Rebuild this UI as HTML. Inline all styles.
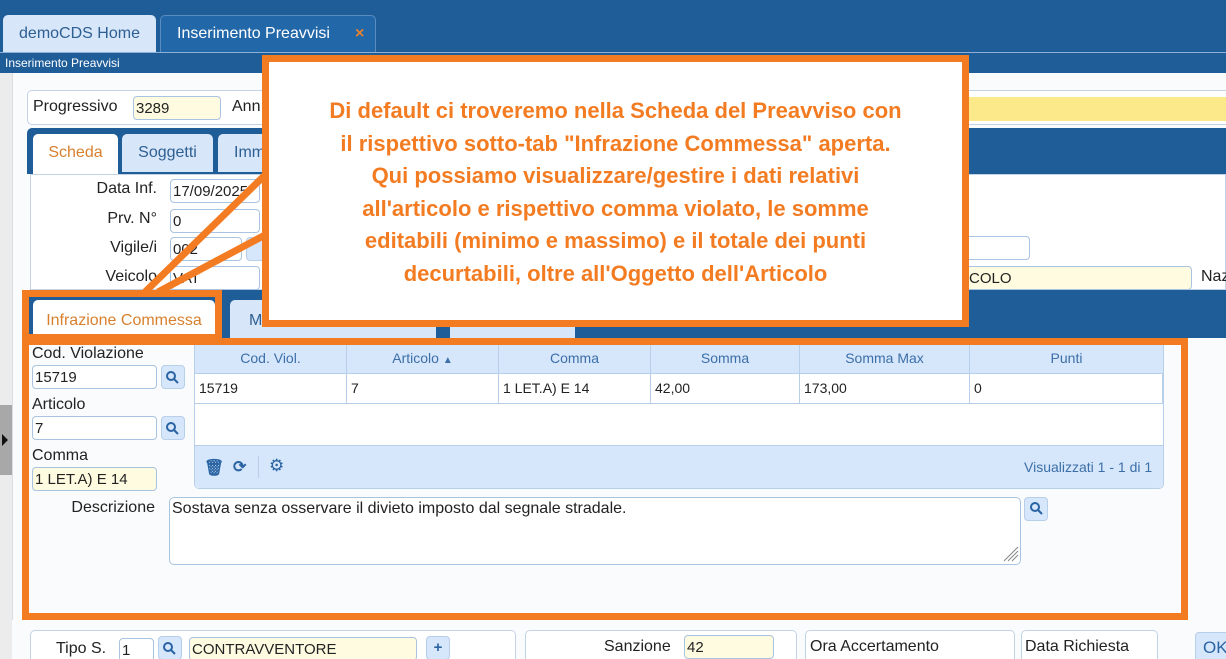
<!DOCTYPE html>
<html><head><meta charset="utf-8"><style>
*{box-sizing:border-box;margin:0;padding:0}
html,body{width:1226px;height:659px;overflow:hidden}
body{position:relative;background:#1f5d99;font-family:"Liberation Sans",sans-serif;font-size:15px;color:#222}
.a{position:absolute}
.tab{position:absolute;border-radius:5px 5px 0 0;font-size:16px}
.inp{position:absolute;background:#fff;border:1px solid #a9c4e0;border-radius:4px;height:24px;font-size:15px;padding:2px 2px;line-height:19px}
.y{background:#fffbe0}
.lbl{position:absolute;font-size:16px;text-align:right}
.btn{position:absolute;width:24px;height:24px;background:#d6e6fb;border:1px solid #b8cfe9;border-radius:4px}
.th{position:absolute;top:345px;height:28px;line-height:26px;color:#3c6fa8;text-align:center;font-size:14px;border-right:1px solid #b8cfe9}
.td{position:absolute;top:374px;height:29px;line-height:29px;font-size:14px;padding-left:4px;border-right:1px solid #b8cfe9}
.fs{position:absolute;background:#fff;border:1px solid #c3d3e6;border-radius:5px}
</style></head><body>
<div class="tab" style="left:3px;top:15px;width:153px;height:38px;background:#d7e6f8;color:#2e5f93;line-height:37px;text-align:center">demoCDS Home</div>
<div class="tab" style="left:160px;top:15px;width:216px;height:38px;background:#2267a8;border:1px solid #5a8cc0;border-bottom:none;color:#fff;line-height:36px;padding-left:16px">Inserimento Preavvisi<span style="position:absolute;left:194px;color:#e8822e;font-weight:bold">×</span></div>
<div class="a" style="left:0;top:52px;width:1226px;height:21px;background:#1f5d99;border-top:1px solid #8fb0d4;color:#fff;font-size:12px;line-height:20px;padding-left:5px">Inserimento Preavvisi</div>
<div class="a" style="left:0;top:73px;width:12px;height:586px;background:#ececec"></div>
<div class="a" style="left:0;top:405px;width:12px;height:70px;background:#a8a8a8"></div>
<div class="a" style="left:2px;top:434px;width:0;height:0;border-left:6px solid #111;border-top:6px solid transparent;border-bottom:6px solid transparent"></div>
<div class="a" style="left:12px;top:73px;width:1214px;height:586px;background:#fafbfc;border-left:1px solid #ddd"></div>
<div class="fs" style="left:27px;top:90px;width:1210px;height:35px"></div>
<div class="lbl" style="left:33px;top:98px;text-align:left">Progressivo</div>
<div class="inp y" style="left:133px;top:96px;width:88px">3289</div>
<div class="lbl" style="left:232px;top:98px;text-align:left">Ann</div>
<div class="a" style="left:900px;top:97px;width:326px;height:24px;background:#fbe98a"></div>
<div class="a" style="left:27px;top:128px;width:1199px;height:46px;background:#1f5d99;border-radius:5px 0 0 0"></div>
<div class="tab" style="left:33px;top:134px;width:85px;height:40px;background:#fff;color:#d8802e;line-height:38px;text-align:center">Scheda</div>
<div class="tab" style="left:122px;top:134px;width:91px;height:38px;background:#d7e6f8;color:#2e5f93;line-height:38px;text-align:center">Soggetti</div>
<div class="tab" style="left:218px;top:134px;width:60px;height:38px;background:#d7e6f8;color:#2e5f93;line-height:38px;padding-left:16px">Imm</div>
<div class="a" style="left:30px;top:174px;width:1196px;height:116px;background:#fff;border:1px solid #c3d3e6"></div>
<div class="lbl" style="left:40px;top:180px;width:117px">Data Inf.</div>
<div class="inp" style="left:170px;top:179px;width:90px">17/09/2025</div>
<div class="lbl" style="left:40px;top:210px;width:117px">Prv. N°</div>
<div class="inp" style="left:170px;top:209px;width:90px">0</div>
<div class="lbl" style="left:40px;top:239px;width:117px">Vigile/i</div>
<div class="inp" style="left:170px;top:237px;width:72px">002</div>
<div class="btn" style="left:246px;top:237px"></div>
<div class="inp" style="left:900px;top:236px;width:130px"></div>
<div class="lbl" style="left:40px;top:268px;width:117px">Veicolo</div>
<div class="inp" style="left:170px;top:266px;width:90px">VAT</div>
<div class="inp y" style="left:900px;top:266px;width:292px;padding-left:68px">COLO</div>
<div class="lbl" style="left:1201px;top:268px;text-align:left">Naz</div>
<div class="a" style="left:27px;top:290px;width:1199px;height:48px;background:#1f5d99"></div>
<div class="tab" style="left:33px;top:300px;width:182px;height:38px;background:#fff;color:#d8802e;line-height:42px;text-align:center">Infrazione Commessa</div>
<div class="tab" style="left:230px;top:300px;width:206px;height:38px;background:#d7e6f8;color:#2e5f93;line-height:42px;text-align:center">Mancata Contestazione</div>
<div class="tab" style="left:450px;top:300px;width:125px;height:38px;background:#d7e6f8;color:#2e5f93;line-height:42px;text-align:center">Dati Rilevatori</div>
<div class="a" style="left:27px;top:338px;width:1199px;height:282px;background:#fafbfc"></div>
<div class="lbl" style="left:32px;top:345px;text-align:left">Cod. Violazione</div>
<div class="inp" style="left:32px;top:365px;width:125px">15719</div>
<div class="btn" style="left:161px;top:365px"></div>
<div class="lbl" style="left:32px;top:396px;text-align:left">Articolo</div>
<div class="inp" style="left:32px;top:416px;width:125px">7</div>
<div class="btn" style="left:161px;top:416px"></div>
<div class="lbl" style="left:32px;top:447px;text-align:left">Comma</div>
<div class="inp y" style="left:32px;top:467px;width:125px">1 LET.A) E 14</div>
<div class="a" style="left:194px;top:345px;width:970px;height:144px;background:#fff;border:1px solid #b8cfe9;border-radius:0 0 5px 5px"></div>
<div class="a" style="left:195px;top:345px;width:968px;height:29px;background:#d6e6fb;border-bottom:1px solid #b8cfe9"></div>
<div class="th" style="left:195px;width:152px">Cod. Viol.</div>
<div class="th" style="left:347px;width:152px">Articolo <span style="font-size:10px">▲</span></div>
<div class="th" style="left:499px;width:152px">Comma</div>
<div class="th" style="left:651px;width:149px">Somma</div>
<div class="th" style="left:800px;width:170px">Somma Max</div>
<div class="th" style="left:970px;width:193px;border:none">Punti</div>
<div class="a" style="left:195px;top:403px;width:968px;height:1px;background:#b8cfe9"></div>
<div class="td" style="left:195px;width:152px">15719</div>
<div class="td" style="left:347px;width:152px">7</div>
<div class="td" style="left:499px;width:152px">1 LET.A) E 14</div>
<div class="td" style="left:651px;width:149px">42,00</div>
<div class="td" style="left:800px;width:170px">173,00</div>
<div class="td" style="left:970px;width:193px">0</div>
<div class="a" style="left:195px;top:445px;width:968px;height:43px;background:#d6e6fb;border-top:1px solid #b8cfe9;border-radius:0 0 5px 5px"></div>
<div class="a" style="left:204px;top:458px;color:#2a64a3;font-size:16px;font-weight:bold">🗑</div>
<div class="a" style="left:233px;top:457px;color:#2a64a3;font-size:16px;font-weight:bold">⟳</div>
<div class="a" style="left:258px;top:456px;width:1px;height:22px;background:#b8cfe9"></div>
<div class="a" style="left:269px;top:456px;color:#2a64a3;font-size:17px">⚙</div>
<div class="a" style="left:1024px;top:459px;color:#3c6fa8;font-size:14px">Visualizzati 1 - 1 di 1</div>
<div class="lbl" style="left:40px;top:499px;width:115px">Descrizione</div>
<div class="a" style="left:169px;top:497px;width:852px;height:68px;background:#fff;border:1px solid #a9c4e0;border-radius:5px;padding:2px;font-size:16px">Sostava senza osservare il divieto imposto dal segnale stradale.</div>
<div class="btn" style="left:1024px;top:497px"></div>
<div class="a" style="left:12px;top:620px;width:1214px;height:39px;background:#fafbfc"></div>
<div class="fs" style="left:30px;top:630px;width:486px;height:40px"></div>
<div class="lbl" style="left:56px;top:640px">Tipo S.</div>
<div class="inp" style="left:119px;top:638px;width:35px">1</div>
<div class="btn" style="left:158px;top:636px"></div>
<div class="inp y" style="left:189px;top:637px;width:228px">CONTRAVVENTORE</div>
<div class="btn" style="left:426px;top:636px;color:#2a64a3;font-weight:bold;text-align:center;line-height:22px">+</div>
<div class="fs" style="left:525px;top:630px;width:272px;height:40px"></div>
<div class="lbl" style="left:604px;top:638px">Sanzione</div>
<div class="inp y" style="left:684px;top:635px;width:90px">42</div>
<div class="fs" style="left:805px;top:630px;width:210px;height:40px"></div>
<div class="lbl" style="left:810px;top:638px">Ora Accertamento</div>
<div class="fs" style="left:1021px;top:630px;width:137px;height:40px"></div>
<div class="lbl" style="left:1025px;top:638px">Data Richiesta</div>
<div class="a" style="left:1195px;top:632px;width:40px;height:30px;background:#d6e6fb;border:1px solid #b8cfe9;border-radius:4px;color:#2a64a3;font-size:17px;padding:5px 7px">OK</div>
<svg class="a" style="left:0;top:0" width="1226" height="659">
<g fill="none" stroke="#2a64a3" stroke-width="2">
<circle cx="171" cy="376" r="4"/><line x1="174" y1="379" x2="178" y2="383"/>
<circle cx="171" cy="427" r="4"/><line x1="174" y1="430" x2="178" y2="434"/>
<circle cx="1035" cy="507" r="4"/><line x1="1038" y1="510" x2="1042" y2="514"/>
<circle cx="168" cy="647" r="4"/><line x1="171" y1="650" x2="175" y2="654"/>
</g>
<g stroke="#888" stroke-width="1"><line x1="1004" y1="561" x2="1018" y2="547"/><line x1="1008" y1="561" x2="1018" y2="551"/><line x1="1012" y1="561" x2="1018" y2="555"/></g>
<g stroke="#f37c22" stroke-width="7" fill="none">
<line x1="265" y1="175" x2="145" y2="292"/>
<line x1="265" y1="235" x2="158" y2="292"/>
<rect x="25.5" y="293.5" width="193" height="44"/>
<rect x="25.5" y="341.5" width="1159" height="275"/>
</g>
</svg>
<div class="a" style="left:262px;top:55px;width:707px;height:272px;background:#fff;border:7px solid #f37c22;color:#f37c22;font-weight:bold;font-size:22px;line-height:32.5px;text-align:center;padding-top:33px">Di default ci troveremo nella Scheda del Preavviso con<br>il rispettivo sotto-tab "Infrazione Commessa" aperta.<br>Qui possiamo visualizzare/gestire i dati relativi<br>all'articolo e rispettivo comma violato, le somme<br>editabili (minimo e massimo) e il totale dei punti<br>decurtabili, oltre all'Oggetto dell'Articolo</div>
</body></html>
